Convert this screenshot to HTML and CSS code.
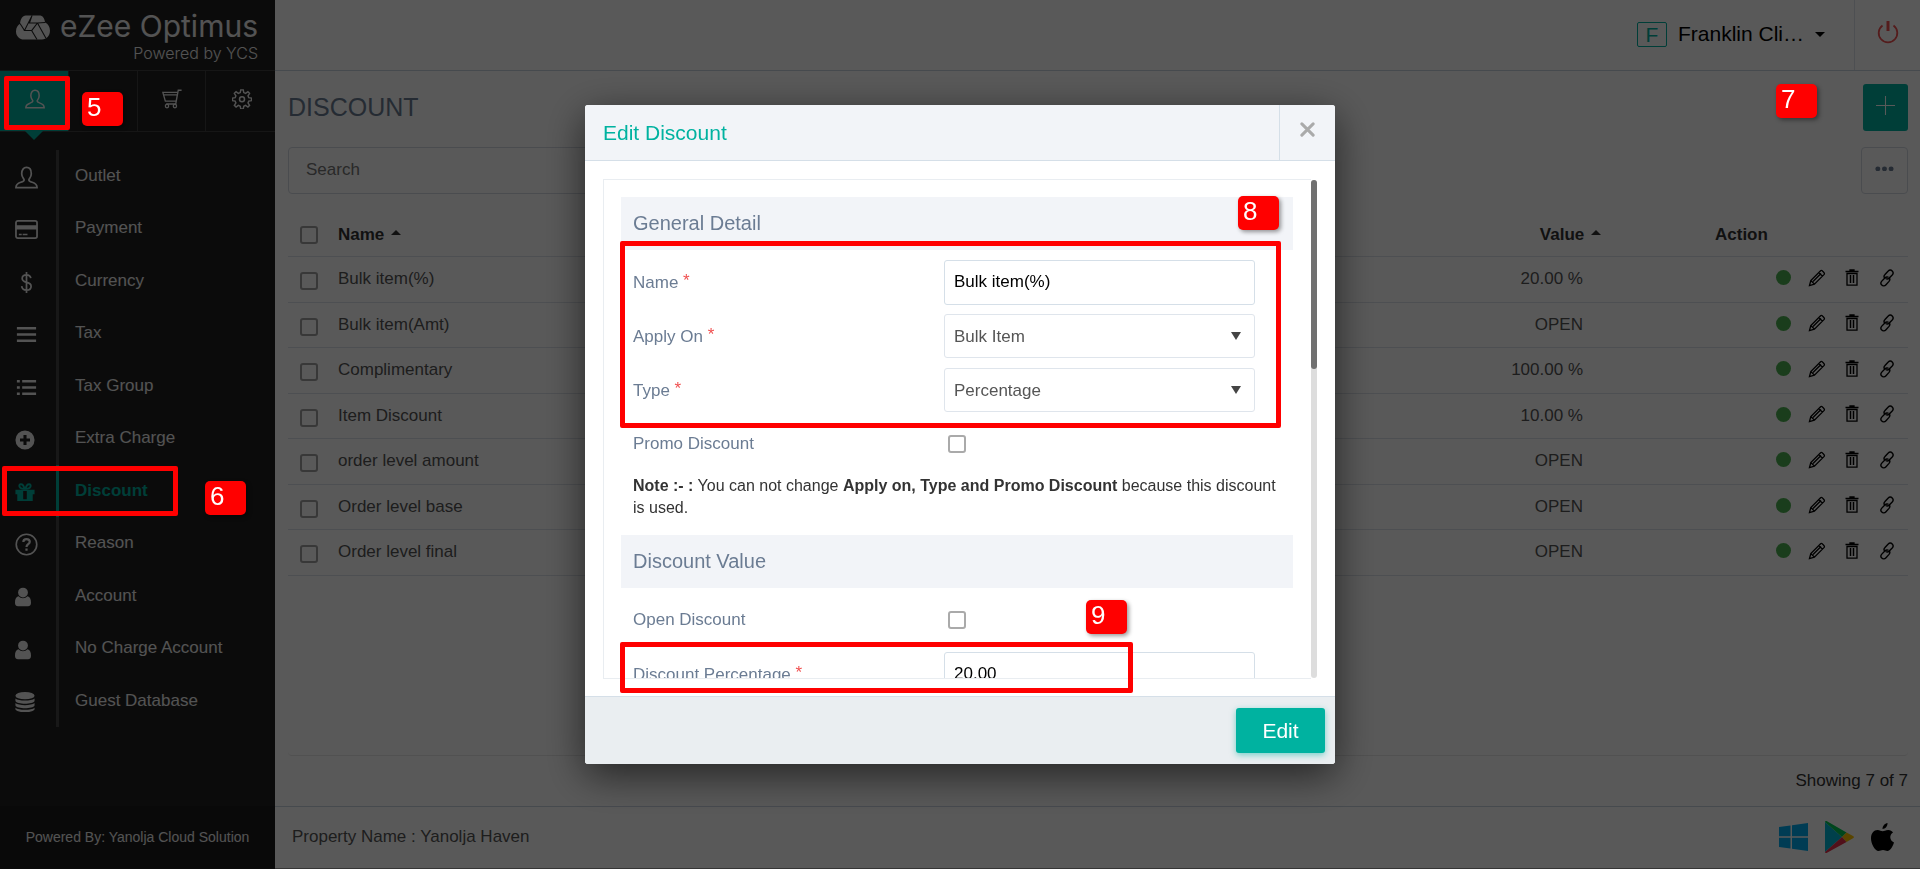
FILE: index.html
```html
<!DOCTYPE html>
<html lang="en">
<head>
    <meta charset="UTF-8">
    <meta name="viewport" content="width=device-width, initial-scale=1.0">
    <title>eZee Optimus - Discount</title>
    <link rel="stylesheet" href="styles.css">
</head>
<body>
    <!-- Icon set -->
    <svg class="sprite" aria-hidden="true">
        <symbol id="i-user" viewBox="0 0 24 24"><path d="M1 22.5c0-3.500 2-4.500 5-5.500 2-.7 3.500-1.200 3.500-2.500 0-1.200-2.500-2.500-2.500-6.500C7 4 9 1.500 12 1.500S17 4 17 8c0 4-2.500 5.300-2.500 6.500 0 1.300 1.500 1.800 3.500 2.500 3 1 5 2 5 5.500z" fill="none" stroke="currentColor" stroke-width="1.800"/></symbol>
        <symbol id="i-card" viewBox="0 0 24 24"><rect x="1" y="3" width="22" height="18" rx="2" fill="none" stroke="currentColor" stroke-width="1.800"/><path d="M1 7.500h22V12H1zM4 16.500h3v1.600H4zM8 16.500h5v1.600H8z" fill="currentColor"/></symbol>
        <symbol id="i-dollar" viewBox="0 0 24 24"><path d="M12 1v22M16.500 7.500C16 5 14.500 4 12 4 9.500 4 7.500 5.300 7.500 7.800c0 5.400 9.300 2.900 9.300 8 0 2.700-2 4.200-4.800 4.200-2.900 0-4.700-1.500-5-4.200" fill="none" stroke="currentColor" stroke-width="1.800"/></symbol>
        <symbol id="i-bars" viewBox="0 0 24 24"><path d="M2 5.500h20M2 12h20M2 18.500h20" stroke="currentColor" stroke-width="2.800"/></symbol>
        <symbol id="i-list" viewBox="0 0 24 24"><path d="M7.500 5.500H22M7.500 12H22M7.500 18.500H22M2 5.500h3M2 12h3M2 18.500h3" stroke="currentColor" stroke-width="2.600"/></symbol>
        <symbol id="i-plus-circle" viewBox="1 1 22 22"><path fill-rule="evenodd" d="M12 1.500a10.500 10.500 0 1 0 0 21 10.500 10.500 0 0 0 0-21zM10.300 6.500h3.400v3.800h3.800v3.400h-3.800v3.800h-3.400v-3.800H6.500v-3.400h3.800z" fill="currentColor"/></symbol>
        <symbol id="i-gift" viewBox="1 1 22 22"><path d="M1.500 9.500h21v5h-2V22h-17v-7.500h-2zM10 11v9h4v-9z" fill="currentColor" fill-rule="evenodd"/><path d="M11.500 8.500C5 9 4.500 3.500 7.500 3.500c2.500 0 3.500 3 4 5zM12.500 8.500c6.500.5 7-5 4-5-2.500 0-3.500 3-4 5z" fill="none" stroke="currentColor" stroke-width="2"/></symbol>
        <symbol id="i-help" viewBox="0 0 24 24"><circle cx="12" cy="12" r="10.700" fill="none" stroke="currentColor" stroke-width="1.700"/><path d="M8.700 9.500c0-2 1.300-3.200 3.300-3.200s3.400 1.100 3.400 2.900c0 2.500-3.400 2.500-3.400 5.300M12 16.200v2.400" fill="none" stroke="currentColor" stroke-width="2.300"/></symbol>
        <symbol id="i-person" viewBox="3 1 18 22"><circle cx="12" cy="7" r="5.500" fill="currentColor"/><path d="M7 11.200C9.500 14 14.500 14 17 11.200c3 .8 4 3.300 4 7.300 0 2.500-1 4-3.500 4h-11C4 22.500 3 21 3 18.500c0-4 1-6.500 4-7.300z" fill="currentColor"/></symbol>
        <symbol id="i-database" viewBox="1 1 22 22"><ellipse cx="12" cy="5" rx="10.500" ry="4" fill="currentColor"/><path d="M1.500 8.200c3 3 18 3 21 0v2.600c-2 4-19 4-21 0zM1.500 13.200c3 3 18 3 21 0v2.600c-2 4-19 4-21 0zM1.500 18.200c3 3 18 3 21 0v2.100c-2 4-19 4-21 0z" fill="currentColor"/></symbol>
        <symbol id="i-cart" viewBox="0 0 24 24"><path d="M1 4h18l-2 10.500H4zM1.500 7h17M23.500 1.500h-4L16.500 18H5" fill="none" stroke="currentColor" stroke-width="1.600"/><circle cx="6" cy="20.500" r="2" fill="none" stroke="currentColor" stroke-width="1.500"/><circle cx="15.500" cy="20.500" r="2" fill="none" stroke="currentColor" stroke-width="1.500"/></symbol>
        <symbol id="i-gear" viewBox="0 0 24 24"><path d="M10.500 1h3l.6 3.300 2.200.9 2.800-1.900 2 2-1.900 2.800.9 2.300 3.300.6v3l-3.300.6-.9 2.200 1.900 2.800-2 2.100-2.800-2-2.200 1-.6 3.200h-3l-.6-3.200-2.300-1-2.700 2-2.100-2.100 1.900-2.800-.9-2.200L.6 14v-3l3.200-.6.9-2.300-1.900-2.800 2.100-2 2.700 1.900 2.300-.9z" fill="none" stroke="currentColor" stroke-width="1.700"/><circle cx="12" cy="12.300" r="3" fill="none" stroke="currentColor" stroke-width="1.800"/></symbol>
        <symbol id="i-pencil" viewBox="0 0 18 18"><path d="M1.500 16.500l1.300-5L12.600 1.700c1-1 4.700 2.500 3.600 3.700L6.400 15.100zM2.800 11.500l3.600 3.600M5 12.500l8-8M10.800 3.500l3.600 3.600" fill="none" stroke="currentColor" stroke-width="1.300"/></symbol>
        <symbol id="i-trash" viewBox="0 0 18 18"><path d="M2.500 2.500h13M7 2.200V1h4v1.200M4 4.500v11.700h10V4.500z" fill="none" stroke="currentColor" stroke-width="1.300"/><path d="M7.500 6v8M10.500 6v8" stroke="currentColor" stroke-width="1.500"/></symbol>
        <symbol id="i-link" viewBox="0 0 18 18"><path d="M7 9.500C5.500 8 6 6.500 7 5.500l3-3.300c1.500-1.400 3.200-1.200 4.200-.2 1.200 1.200 1.200 2.700 0 4L11.300 9c-1 1-2.300 1.200-3.600.5M10.800 8.200c1.500 1.500 1.200 3 .2 4.200l-3 3.300c-1.400 1.500-3.200 1.400-4.200.4-1.200-1.200-1.200-2.700 0-4l3-3.200c1-1 2.300-1.200 3.600-.7" fill="none" stroke="currentColor" stroke-width="1.400"/></symbol>
    </svg>

    <div class="page">
        <aside class="sidebar">
            <div class="logo">
                <svg class="logo-mark" viewBox="0 0 38 28">
                    <path d="M11 1h15c4 0 6 3 6.500 8 3.500 1.500 5.500 5 5.500 9 0 6-4 10-9 10H9c-5 0-9-4-9-9 0-4 2-7 4.500-8.500C5 5 7 1 11 1z" fill="currentColor"/>
                    <path d="M4.500 10l5 8M18 1L9.500 18h8M18 1l-3 8.500h9l9.500 17M24 9.500L32.500 9M24 9.500l-6.500 8.500 6 10" fill="none" stroke="#222" stroke-width="1.200"/>
                </svg>
                <div class="logo-text">
                    <span class="logo-name">eZee Optimus</span>
                    <span class="logo-sub">Powered by YCS</span>
                </div>
            </div>

            <nav class="tabs" aria-label="Modules">
                <a class="tab active" href="#"><svg class="tab-icon"><use href="#i-user"/></svg></a>
                <a class="tab" href="#"></a>
                <a class="tab" href="#"><svg class="tab-icon"><use href="#i-cart"/></svg></a>
                <a class="tab" href="#"><svg class="tab-icon"><use href="#i-gear"/></svg></a>
            </nav>

            <ul class="menu">
                <li><a href="#"><span class="menu-icon"><svg><use href="#i-user"/></svg></span><span class="menu-text">Outlet</span></a></li>
                <li><a href="#"><span class="menu-icon"><svg><use href="#i-card"/></svg></span><span class="menu-text">Payment</span></a></li>
                <li><a href="#"><span class="menu-icon"><svg><use href="#i-dollar"/></svg></span><span class="menu-text">Currency</span></a></li>
                <li><a href="#"><span class="menu-icon"><svg><use href="#i-bars"/></svg></span><span class="menu-text">Tax</span></a></li>
                <li><a href="#"><span class="menu-icon"><svg><use href="#i-list"/></svg></span><span class="menu-text">Tax Group</span></a></li>
                <li><a href="#"><span class="menu-icon solid"><svg><use href="#i-plus-circle"/></svg></span><span class="menu-text">Extra Charge</span></a></li>
                <li class="active"><a href="#"><span class="menu-icon solid"><svg><use href="#i-gift"/></svg></span><span class="menu-text">Discount</span></a></li>
                <li><a href="#"><span class="menu-icon"><svg><use href="#i-help"/></svg></span><span class="menu-text">Reason</span></a></li>
                <li><a href="#"><span class="menu-icon person"><svg><use href="#i-person"/></svg></span><span class="menu-text">Account</span></a></li>
                <li><a href="#"><span class="menu-icon person"><svg><use href="#i-person"/></svg></span><span class="menu-text">No Charge Account</span></a></li>
                <li><a href="#"><span class="menu-icon solid"><svg><use href="#i-database"/></svg></span><span class="menu-text">Guest Database</span></a></li>
            </ul>

            <div class="powered">Powered By: Yanolja Cloud Solution</div>

            <!-- Step markers -->
            <div class="mark mark-tab"></div>
            <div class="step step-5">5</div>
            <div class="mark mark-menu"></div>
            <div class="step step-6">6</div>
        </aside>

        <main class="main">
            <header class="topbar">
                <button class="user" type="button">
                    <span class="user-badge">F</span>
                    <span>Franklin Cli…</span>
                    <span class="caret-down"></span>
                </button>
                <button class="power" type="button" aria-label="Log out">
                    <svg viewBox="0 0 22 24"><path d="M5.500 5.500a9.300 9.300 0 1 0 11 0" fill="none" stroke="currentColor" stroke-width="1.800"/><path d="M11 1v10" stroke="currentColor" stroke-width="3"/></svg>
                </button>
            </header>

            <div class="content">
                <div class="title-row">
                    <h1>DISCOUNT</h1>
                    <button class="btn-add" type="button" aria-label="Add">
                        <svg viewBox="0 0 18 18"><path d="M9 0v18M0 9h18" stroke="currentColor" stroke-width="1"/></svg>
                    </button>
                    <div class="step step-7">7</div>
                </div>
                <div class="search-row">
                    <input class="search" type="text" placeholder="Search" aria-label="Search">
                    <button class="btn-more" type="button" aria-label="More">
                        <svg viewBox="0 0 20 6"><circle cx="3" cy="3" r="2.600" fill="currentColor"/><circle cx="10" cy="3" r="2.600" fill="currentColor"/><circle cx="17" cy="3" r="2.600" fill="currentColor"/></svg>
                    </button>
                </div>

                <div class="card">
                    <table class="list">
                        <thead>
                            <tr>
                                <th class="col-check"><input type="checkbox" aria-label="Select all"></th>
                                <th>Name <span class="caret-up"></span></th>
                                <th class="col-value">Value <span class="caret-up"></span></th>
                                <th class="col-action">Action</th>
                            </tr>
                        </thead>
                        <tbody>
                            <tr>
                                <td class="col-check"><input type="checkbox" aria-label="Bulk item(%)"></td>
                                <td>Bulk item(%)</td>
                                <td class="col-value">20.00 %</td>
                                <td class="col-action"><div class="actions"><span class="dot"></span><svg><use href="#i-pencil"/></svg><svg><use href="#i-trash"/></svg><svg><use href="#i-link"/></svg></div></td>
                            </tr>
                            <tr>
                                <td class="col-check"><input type="checkbox" aria-label="Bulk item(Amt)"></td>
                                <td>Bulk item(Amt)</td>
                                <td class="col-value">OPEN</td>
                                <td class="col-action"><div class="actions"><span class="dot"></span><svg><use href="#i-pencil"/></svg><svg><use href="#i-trash"/></svg><svg><use href="#i-link"/></svg></div></td>
                            </tr>
                            <tr>
                                <td class="col-check"><input type="checkbox" aria-label="Complimentary"></td>
                                <td>Complimentary</td>
                                <td class="col-value">100.00 %</td>
                                <td class="col-action"><div class="actions"><span class="dot"></span><svg><use href="#i-pencil"/></svg><svg><use href="#i-trash"/></svg><svg><use href="#i-link"/></svg></div></td>
                            </tr>
                            <tr>
                                <td class="col-check"><input type="checkbox" aria-label="Item Discount"></td>
                                <td>Item Discount</td>
                                <td class="col-value">10.00 %</td>
                                <td class="col-action"><div class="actions"><span class="dot"></span><svg><use href="#i-pencil"/></svg><svg><use href="#i-trash"/></svg><svg><use href="#i-link"/></svg></div></td>
                            </tr>
                            <tr>
                                <td class="col-check"><input type="checkbox" aria-label="order level amount"></td>
                                <td>order level amount</td>
                                <td class="col-value">OPEN</td>
                                <td class="col-action"><div class="actions"><span class="dot"></span><svg><use href="#i-pencil"/></svg><svg><use href="#i-trash"/></svg><svg><use href="#i-link"/></svg></div></td>
                            </tr>
                            <tr>
                                <td class="col-check"><input type="checkbox" aria-label="Order level base"></td>
                                <td>Order level base</td>
                                <td class="col-value">OPEN</td>
                                <td class="col-action"><div class="actions"><span class="dot"></span><svg><use href="#i-pencil"/></svg><svg><use href="#i-trash"/></svg><svg><use href="#i-link"/></svg></div></td>
                            </tr>
                            <tr>
                                <td class="col-check"><input type="checkbox" aria-label="Order level final"></td>
                                <td>Order level final</td>
                                <td class="col-value">OPEN</td>
                                <td class="col-action"><div class="actions"><span class="dot"></span><svg><use href="#i-pencil"/></svg><svg><use href="#i-trash"/></svg><svg><use href="#i-link"/></svg></div></td>
                            </tr>
                        </tbody>
                    </table>
                </div>
                <div class="showing">Showing 7 of 7</div>
            </div>

            <footer class="footer">
                <span>Property Name : Yanolja Haven</span>
                <div class="stores">
                    <svg width="29" height="28" viewBox="0 0 29 28"><path d="M0 4l11.500-1.600V13.200H0zM13 2.200L29 0v13.200H13zM0 14.800h11.500v10.800L0 24zM13 14.800h16V28l-16-2.200z" fill="#00adef"/></svg>
                    <svg width="29" height="32" viewBox="0 0 29 32"><path d="M0 1v30l17-15z" fill="#00b8d8"/><path d="M0 1c0-1 1-1.300 2-.7L21.500 11.500 17 16z" fill="#00c853"/><path d="M21.500 11.500l6.500 3.600c1.200.7 1.200 1.600 0 2.200l-6.500 3.600L17 16z" fill="#ffc400"/><path d="M0 31c0 1 1 1.300 2 .7l19.500-10.800L17 16z" fill="#e8304a"/></svg>
                    <svg width="23" height="28" viewBox="0 0 23 28"><path d="M16.500 0c.3 3-2.300 6-5 6 0-3 2.300-5.600 5-6zM22 9.500c-4 2.500-3.500 8 1 10-1.500 4.500-4 8.500-6.500 8.500-1.800 0-2.500-1-4.500-1s-2.800 1-4.500 1C4 28 0 21 0 15.500 0 10 3 7 6.500 7c2.200 0 3.700 1.300 5.200 1.300S14.500 7 17.300 7c2 0 3.700 1 4.700 2.500z" fill="#000"/></svg>
                </div>
            </footer>
        </main>
    </div>

    <!-- Edit Discount dialog -->
    <div class="overlay">
        <form class="modal" role="dialog" aria-label="Edit Discount">
            <div class="modal-head">
                <h2>Edit Discount</h2>
                <button class="close" type="button" aria-label="Close">
                    <svg viewBox="0 0 16 16"><path d="M2 2l12 12M14 2L2 14" stroke="currentColor" stroke-width="3.200" stroke-linecap="round"/></svg>
                </button>
            </div>
            <div class="modal-body">
                <div class="pane">
                    <h3>General Detail</h3>
                    <div class="fields">
                        <div class="row">
                            <label for="name">Name <span class="req">*</span></label>
                            <input class="text" id="name" type="text" value="Bulk item(%)">
                        </div>
                        <div class="row">
                            <label for="apply">Apply On <span class="req">*</span></label>
                            <div class="select">
                                <select id="apply"><option>Bulk Item</option></select>
                            </div>
                        </div>
                        <div class="row">
                            <label for="type">Type <span class="req">*</span></label>
                            <div class="select">
                                <select id="type"><option>Percentage</option></select>
                            </div>
                        </div>
                        <div class="row">
                            <label for="promo">Promo Discount</label>
                            <input id="promo" type="checkbox">
                        </div>
                    </div>
                    <p class="note"><b>Note :- :</b> You can not change <b>Apply on, Type and Promo Discount</b> because this discount is used.</p>
                    <h3>Discount Value</h3>
                    <div class="fields">
                        <div class="row">
                            <label for="open">Open Discount</label>
                            <input id="open" type="checkbox">
                        </div>
                        <div class="row">
                            <label for="percent">Discount Percentage <span class="req">*</span></label>
                            <input class="text" id="percent" type="text" value="20.00">
                        </div>
                    </div>
                </div>
                <div class="track"><div class="thumb"></div></div>
            </div>
            <div class="modal-foot">
                <button class="btn-edit" type="button">Edit</button>
            </div>

            <div class="mark mark-general"></div>
            <div class="step step-8">8</div>
            <div class="mark mark-percent"></div>
            <div class="step step-9">9</div>
        </form>
    </div>
</body>
</html>
```
FILE: styles.css
```css
* {
    margin: 0;
    padding: 0;
    box-sizing: border-box;
}

body,
button,
input,
select {
    font-family: "Liberation Sans", Arial, sans-serif;
    font-size: 17px;
}

body {
    background: #fff;
    color: #555;
    overflow: hidden;
}

a {
    color: inherit;
    text-decoration: none;
}

button {
    background: none;
    border: none;
    cursor: pointer;
}

svg {
    display: block;
}

.sprite {
    display: none;
}

.page {
    display: flex;
    min-height: 100vh;
}

/* Sidebar */
.sidebar {
    position: relative;
    flex: none;
    display: flex;
    flex-direction: column;
    width: 275px;
    background: #222;
    color: #eee;
}

.logo {
    display: flex;
    gap: 10px;
    height: 70px;
    padding: 8px 17px 0 16px;
    color: #eee;
}

.logo-mark {
    width: 38px;
    height: 28px;
    margin-top: 5px;
}

.logo-text {
    display: flex;
    flex: 1;
    flex-direction: column;
    align-items: flex-end;
    font-family: Inter, "Open Sans", sans-serif;
    white-space: nowrap;
}

.logo-name {
    font-size: 30px;
    font-weight: 400;
    line-height: 36px;
}

.logo-sub {
    font-size: 16px;
    font-weight: 300;
    line-height: 18px;
}

.tabs {
    display: grid;
    grid-template-columns: repeat(4, 1fr);
    border-top: 1px solid #404040;
    border-bottom: 1px solid #404040;
}

.tab {
    position: relative;
    display: flex;
    justify-content: center;
    height: 60px;
    padding: 18px 0 0 2px;
    border-right: 1px solid #404040;
}

.tab:last-child {
    border-right: none;
}

.tab.active {
    background: #00b2a0;
}

.tab.active::after {
    content: "";
    position: absolute;
    top: 100%;
    left: 50%;
    margin-left: -9px;
    border: 9px solid transparent;
    border-top-color: #00b2a0;
    border-bottom: none;
}

.tab-icon {
    width: 20px;
    height: 20px;
}

.menu {
    flex: 1;
    margin-top: 18px;
    list-style: none;
}

.menu li {
    height: 52px;
}

.menu li:nth-child(even) {
    height: 53px;
}

.menu a {
    display: flex;
    height: 100%;
}

.menu-icon {
    display: flex;
    align-items: center;
    width: 59px;
    padding: 2px 0 0 15px;
    border-right: 3px solid #464646;
}

.menu-icon svg {
    width: 23px;
    height: 23px;
}

.menu-icon.solid svg {
    width: 20px;
    height: 20px;
}

.menu-icon.person svg {
    width: 16px;
    height: 20px;
}

.menu-text {
    padding-left: 16px;
    line-height: 52px;
}

.menu .active {
    color: #00b2a0;
    font-weight: bold;
}

.menu .active .menu-icon {
    border-color: #00b2a0;
}

.powered {
    height: 63px;
    background: #1c1c1c;
    font-size: 14px;
    line-height: 62px;
    text-align: center;
}

/* Main column */
.main {
    display: flex;
    flex: 1;
    flex-direction: column;
}

.topbar {
    display: flex;
    justify-content: flex-end;
    height: 71px;
    border-bottom: 1px solid #c9d3e0;
}

.user {
    display: flex;
    align-items: center;
    gap: 11px;
    padding: 0 29px 2px 0;
    font-size: 21px;
    color: #000;
}

.user-badge {
    width: 30px;
    border: 1px solid #00b2a0;
    border-radius: 2px;
    color: #00b2a0;
    line-height: 23px;
}

.caret-down {
    border: 5px solid transparent;
    border-top-color: #000;
    border-bottom: none;
}

.power {
    width: 66px;
    padding: 0 22px 7px;
    border-left: 1px solid #dde2ea;
    color: #f05050;
}

.power svg {
    width: 22px;
    height: 24px;
}

.content {
    display: flex;
    flex: 1;
    flex-direction: column;
    padding: 13px 12px 0 13px;
}

.title-row {
    position: relative;
    display: flex;
    justify-content: space-between;
    align-items: center;
    margin-bottom: 16px;
}

h1 {
    font-size: 25px;
    font-weight: normal;
    color: #6b7c93;
}

.btn-add {
    width: 45px;
    height: 47px;
    padding: 0 13px 4px;
    border-radius: 3px;
    background: #00b2a0;
    color: #fff;
}

.search-row {
    display: flex;
    justify-content: space-between;
    margin-bottom: 17px;
}

.search {
    width: 480px;
    height: 47px;
    padding: 0 17px 1px;
    border: 1px solid #d5dae3;
    border-radius: 4px;
    background: transparent;
}

.search::placeholder {
    color: #757575;
}

.btn-more {
    width: 47px;
    height: 47px;
    padding: 0 13px 4px;
    border: 1px solid #d5dae3;
    border-radius: 4px;
    color: #6b7c93;
}

.card {
    flex: 1;
    border-bottom: 1px solid #e8e8e8;
    border-radius: 0 0 4px 4px;
}

.list {
    width: 100%;
    border-collapse: collapse;
    line-height: 20px;
}

.list tr {
    height: 45px;
    border-bottom: 1px solid #dde2ea;
}

.list tbody tr:nth-child(odd) {
    height: 46px;
}

.list th {
    padding-top: 3px;
    color: #333;
    text-align: left;
}

.list .col-check {
    width: 50px;
    padding: 4px 0 0 12px;
}

.list .col-value {
    padding-right: 132px;
    text-align: right;
}

.list th.col-value {
    padding-right: 114px;
}

.list .col-action {
    width: 193px;
}

input[type="checkbox"] {
    display: block;
    width: 18px;
    height: 18px;
    border: 2px solid #a0a0a0;
    border-radius: 3px;
    appearance: none;
}

.caret-up {
    display: inline-block;
    margin: 0 0 5px 2px;
    border: 5px solid transparent;
    border-top: none;
    border-bottom-color: #333;
}

.actions {
    display: flex;
    justify-content: flex-end;
    align-items: center;
    gap: 17px;
    padding: 0 12px 3px 0;
    color: #000;
}

.actions svg {
    width: 18px;
    height: 18px;
}

.dot {
    width: 15px;
    height: 15px;
    border-radius: 50%;
    background: #4caf50;
}

.showing {
    color: #333;
    line-height: 50px;
    text-align: right;
}

.footer {
    display: flex;
    justify-content: space-between;
    align-items: center;
    height: 63px;
    padding: 0 26px 1px 17px;
    border-top: 1px solid #c9d3e0;
    border-bottom: 1px solid #999;
}

.stores {
    display: flex;
    align-items: center;
    gap: 17px;
}

/* Dialog */
.overlay {
    position: fixed;
    inset: 0;
    z-index: 10;
    display: flex;
    justify-content: center;
    align-items: flex-start;
    padding-top: 105px;
    background: rgba(0, 0, 0, 0.65);
}

.modal {
    position: relative;
    width: 750px;
    border-radius: 3px;
    background: #fff;
    box-shadow: 0 11px 40px rgba(0, 0, 0, 0.6);
}

.modal-head {
    display: flex;
    justify-content: space-between;
    border-bottom: 1px solid #d5dfe8;
    border-radius: 3px 3px 0 0;
    background: #f2f4f8;
}

h2 {
    padding-left: 18px;
    color: #00b2a0;
    font-size: 21px;
    font-weight: normal;
    line-height: 55px;
}

.close {
    width: 56px;
    padding: 0 20px 6px;
    border-left: 1px solid #d5dfe8;
    color: #aaa;
}

.modal-body {
    display: flex;
    padding: 18px 18px 17px;
}

.pane {
    flex: 1;
    height: calc(100vh - 369px);
    padding: 17px 18px 0 17px;
    border: 1px solid #e9edf1;
    border-right: none;
    overflow-y: auto;
    scrollbar-width: none;
}

.track {
    width: 6px;
    margin: 1px 0;
    border-radius: 3px;
    background: #ddd;
}

.thumb {
    height: 38%;
    border-radius: 3px;
    background: #707070;
}

h3 {
    padding-left: 12px;
    background: #f2f4f8;
    color: #6b7c93;
    font-size: 20px;
    font-weight: normal;
    line-height: 53px;
}

.fields {
    padding: 5px 12px 4px;
}

.row {
    display: grid;
    grid-template-columns: 311px 311px;
    align-items: center;
    height: 54px;
}

.row label {
    color: #6b7c93;
}

.req {
    color: #f05050;
    font-size: 17px;
    vertical-align: 2px;
}

.row input[type="checkbox"] {
    margin-left: 4px;
    border-color: #aaa;
}

.text,
.select select {
    width: 100%;
    height: 45px;
    padding: 0 9px;
    border: 1px solid #d5dfe8;
    border-radius: 3px;
    background: #fff;
    color: #000;
}

.select {
    position: relative;
}

.select select {
    height: 44px;
    border-color: #dfe5ec;
    color: #555;
    appearance: none;
}

.select::after {
    content: "";
    position: absolute;
    top: 18px;
    right: 14px;
    border: 5px solid transparent;
    border-top: 8px solid #444;
    border-bottom: none;
    pointer-events: none;
}

.note {
    margin: 0 0 16px;
    padding: 0 12px;
    color: #333;
    font-size: 16px;
    line-height: 22px;
}

.modal-foot {
    display: flex;
    justify-content: flex-end;
    padding: 11px 10px;
    border-top: 1px solid #d5dfe8;
    border-radius: 0 0 3px 3px;
    background: #eaeef1;
}

.btn-edit {
    width: 89px;
    height: 45px;
    border-radius: 3px;
    background: #00b2a0;
    box-shadow: 0 2px 6px rgba(0, 178, 160, 0.5);
    color: #fff;
    font-size: 21px;
}

/* Step markers sit above the dimmed page */
.mark {
    position: absolute;
    z-index: 20;
    border: 5px solid #f00;
    border-radius: 2px;
    pointer-events: none;
}

.step {
    position: absolute;
    z-index: 20;
    width: 41px;
    height: 34px;
    padding-left: 5px;
    border-radius: 5px;
    background: #f00;
    box-shadow: 2px 2px 4px rgba(0, 0, 0, 0.4);
    color: #fff;
    font-size: 26px;
    line-height: 30px;
}

.mark-tab {
    top: 76px;
    left: 4px;
    width: 66px;
    height: 54px;
}

.step-5 {
    top: 92px;
    left: 82px;
}

.mark-menu {
    top: 466px;
    left: 2px;
    width: 176px;
    height: 50px;
}

.step-6 {
    top: 481px;
    left: 205px;
}

.step-7 {
    top: 0;
    right: 91px;
}

.mark-general {
    top: 136px;
    left: 35px;
    width: 661px;
    height: 187px;
}

.step-8 {
    top: 91px;
    left: 653px;
}

.mark-percent {
    top: 537px;
    left: 35px;
    width: 513px;
    height: 51px;
}

.step-9 {
    top: 495px;
    left: 501px;
}
```
